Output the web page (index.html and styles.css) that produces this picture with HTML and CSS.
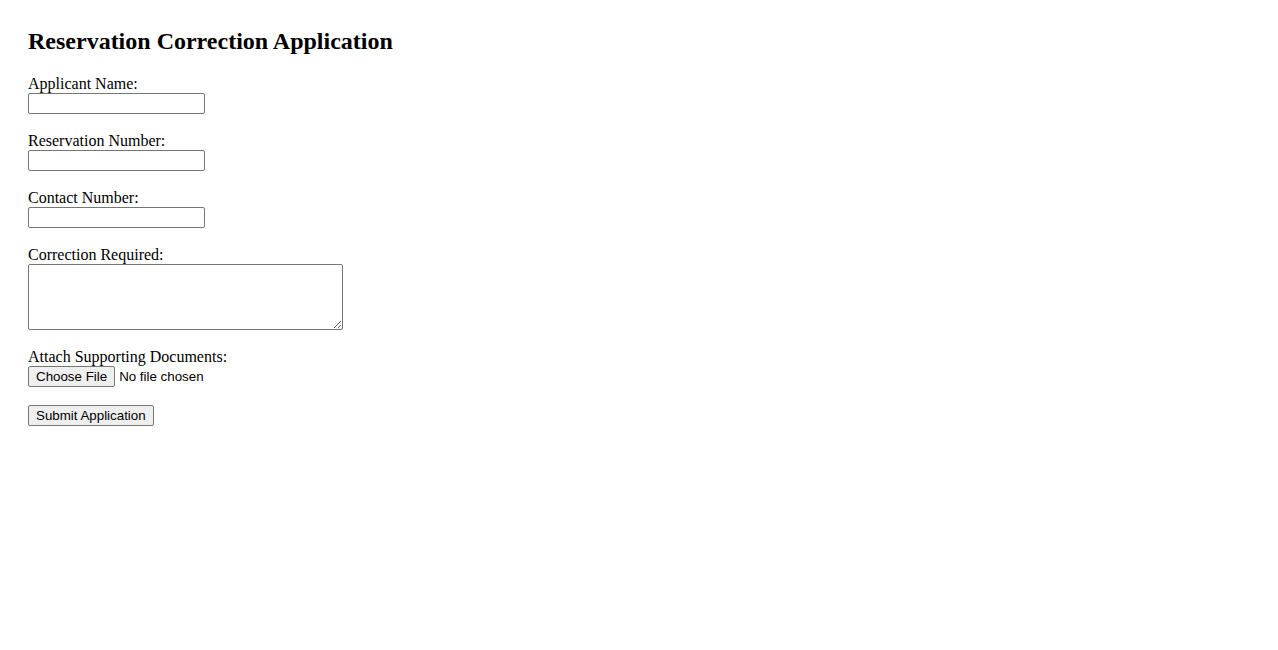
FILE: index.html
```html
<!DOCTYPE html>
<html lang="en">
<head>
<meta charset="utf-8">
<title>Reservation Correction Application</title>
<link rel="stylesheet" href="styles.css">
</head>
<body>
<div class="page">
  <h2 class="title">Reservation Correction Application</h2>
  <form class="form">
    <div class="field">
      <label class="label" for="name">Applicant Name:</label>
      <input class="text" id="name" type="text">
    </div>
    <div class="field">
      <label class="label" for="res">Reservation Number:</label>
      <input class="text" id="res" type="text">
    </div>
    <div class="field">
      <label class="label" for="contact">Contact Number:</label>
      <input class="text" id="contact" type="text">
    </div>
    <div class="field field-area">
      <label class="label" for="corr">Correction Required:</label>
      <textarea class="area" id="corr"></textarea>
    </div>
    <div class="field field-file">
      <label class="label" for="docs">Attach Supporting Documents:</label>
      <div class="file-row">
        <span class="btn">Choose File</span><span class="file-text">No file chosen</span>
      </div>
    </div>
    <div class="actions">
      <button class="btn" type="button">Submit Application</button>
    </div>
  </form>
</div>
</body>
</html>
```
FILE: styles.css
```css
html, body {
  margin: 0;
  padding: 0;
  background: #ffffff;
}
body {
  font-family: "Liberation Serif", "Times New Roman", serif;
  font-size: 16px;
  color: #000000;
}
.page {
  padding: 28px 28px;
}
.title {
  margin: 0 0 20px;
  font-size: 24px;
  font-weight: bold;
  line-height: 27px;
}
.form {
  display: flex;
  flex-direction: column;
  align-items: flex-start;
}
.field {
  display: flex;
  flex-direction: column;
  align-items: flex-start;
  margin-bottom: 18px;
}
.label {
  display: block;
  line-height: 18px;
}
.text {
  box-sizing: border-box;
  width: 177px;
  height: 21px;
  margin: 0;
  padding: 1px 2px;
  border: 1px solid #767676;
  border-radius: 2px;
  font-family: "Liberation Sans", Arial, sans-serif;
  font-size: 13.33px;
}
.field-area {
  margin-bottom: 18px;
}
.area {
  box-sizing: border-box;
  width: 315px;
  height: 66px;
  margin: 0;
  padding: 2px;
  border: 1px solid #767676;
  border-radius: 2px;
  font-family: "Liberation Mono", monospace;
  font-size: 13.33px;
  resize: both;
}
.field-file {
  margin-bottom: 18px;
}
.file-row {
  display: flex;
  align-items: center;
}
.btn {
  box-sizing: border-box;
  display: inline-flex;
  align-items: center;
  height: 21px;
  margin: 0;
  padding: 0 7px;
  background: #efefef;
  border: 1px solid #767676;
  border-radius: 2px;
  font-family: "Liberation Sans", Arial, sans-serif;
  font-size: 13.33px;
  color: #000000;
  line-height: 1;
}
.file-text {
  margin-left: 4px;
  font-family: "Liberation Sans", Arial, sans-serif;
  font-size: 13.33px;
}
.actions {
  display: flex;
}
```
